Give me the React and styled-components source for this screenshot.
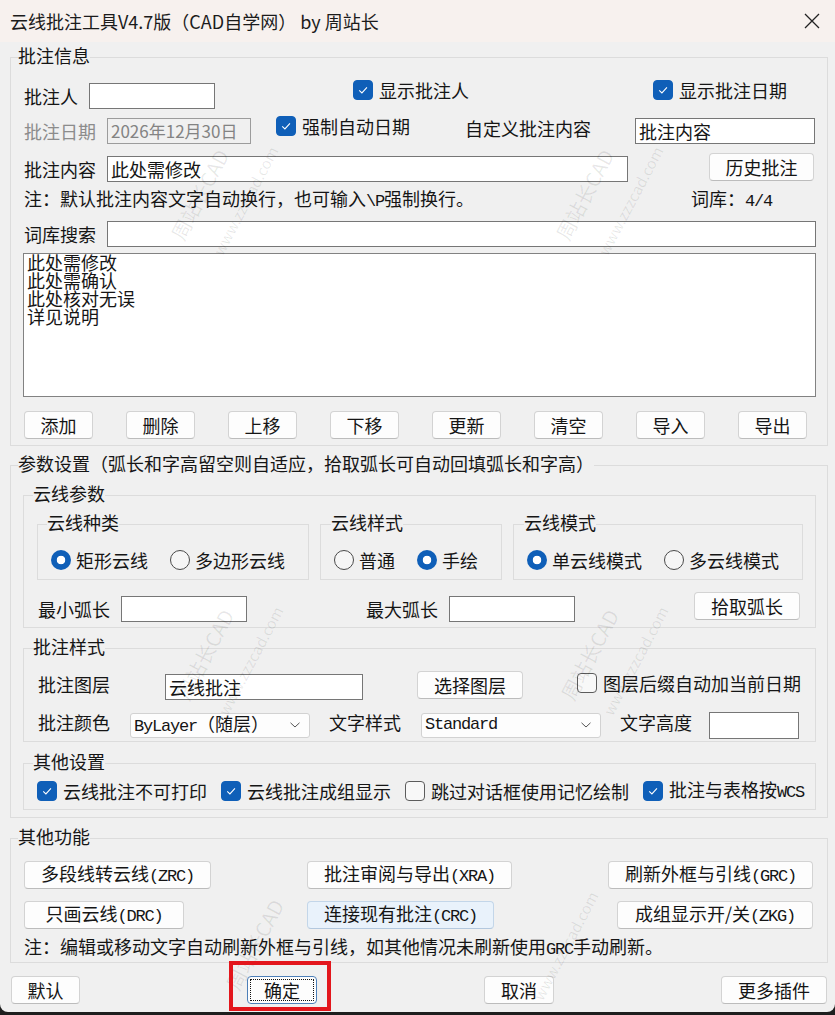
import React from 'react'
import styled, { createGlobalStyle } from 'styled-components'

const GlobalStyle = createGlobalStyle`
  html, body {
    margin: 0;
    padding: 0;
    background: #1e1e1e;
  }
  body {
    font-family: "Noto Sans CJK SC", sans-serif;
    font-size: 18px;
    color: #151515;
  }
`

const marks = [
  { x: 150, y: 180, t: '周站长CAD' },
  { x: 185, y: 190, t: 'www.zzzcad.com' },
  { x: 535, y: 180, t: '周站长CAD' },
  { x: 570, y: 190, t: 'www.zzzcad.com' },
  { x: 155, y: 640, t: '周站长CAD' },
  { x: 190, y: 650, t: 'www.zzzcad.com' },
  { x: 540, y: 640, t: '周站长CAD' },
  { x: 575, y: 650, t: 'www.zzzcad.com' },
  { x: 205, y: 930, t: '周站长CAD' },
  { x: 505, y: 935, t: 'www.zzzcad.com' },
]

const App = () => {
  return (
    <>
      <GlobalStyle />
      <Window>
        <TitleBar>
          <Title>云线批注工具V4.7版（CAD自学网） by 周站长</Title>
          <svg width="16" height="16" viewBox="0 0 16 16">
            <path d="M1 1 L15 15 M15 1 L1 15" stroke="#222" strokeWidth="1.3" fill="none" />
          </svg>
        </TitleBar>

        <Body>
          <Group>
            <Legend>批注信息</Legend>
            <GroupBody $p="0 11px 6px 13px">
              <Row $mt={14}>
                <Label $w={65}>批注人</Label>
                <Field $w={126} />
                <Check $ml={138} $mb={12} $on>显示批注人</Check>
                <Check $ml={184} $mb={12} $on>显示批注日期</Check>
              </Row>
              <Row $mt={9}>
                <Label $w={83} $dim>批注日期</Label>
                <Field $w={144} $dim>2026年12月30日</Field>
                <Check $ml={25} $mb={10} $on>强制自动日期</Check>
                <Label $ml={55} $mb={6}>自定义批注内容</Label>
                <Field $w={180} $ml={44}>批注内容</Field>
              </Row>
              <Row $mt={12}>
                <Label $w={83}>批注内容</Label>
                <Field $w={521}>此处需修改</Field>
                <Btn $w={105} $ml={81} $mb={5}>历史批注</Btn>
              </Row>
              <Row $mt={8} $h={20}>
                <Label>注：默认批注内容文字自动换行，也可输入<Lat>\P</Lat>强制换行。</Label>
                <Label $auto $mr={44}>词库：<Lat>4/4</Lat></Label>
              </Row>
              <Row $mt={11}>
                <Label $w={83}>词库搜索</Label>
                <Field $grow />
              </Row>
              <List>
                <ListLines>
                  <span>此处需修改</span>
                  <span>此处需确认</span>
                  <span>此处核对无误</span>
                  <span>详见说明</span>
                </ListLines>
              </List>
              <ButtonStrip>
                {['添加', '删除', '上移', '下移', '更新', '清空', '导入', '导出'].map(b => (
                  <Btn key={b} $w={69}>{b}</Btn>
                ))}
              </ButtonStrip>
            </GroupBody>
          </Group>

          <Group $mt={7}>
            <Legend>参数设置（弧长和字高留空则自适应，拾取弧长可自动回填弧长和字高）</Legend>
            <GroupBody $p="0 11px 7px 12px">
              <Group $mt={6}>
                <Legend $ml={9}>云线参数</Legend>
                <GroupBody $p="0 0 5px 0">
                  <BoxRow>
                    <Group $mt={5} $w={272}>
                      <Legend $ml={9}>云线种类</Legend>
                      <GroupBody $p="0 0 7px 13px">
                        <Row $mt={12} $h={24}>
                          <Radio $on>矩形云线</Radio>
                          <Radio $ml={22}>多边形云线</Radio>
                        </Row>
                      </GroupBody>
                    </Group>
                    <Group $mt={5} $w={182} $ml={11}>
                      <Legend $ml={10}>云线样式</Legend>
                      <GroupBody $p="0 0 7px 13px">
                        <Row $mt={12} $h={24}>
                          <Radio>普通</Radio>
                          <Radio $ml={22} $on>手绘</Radio>
                        </Row>
                      </GroupBody>
                    </Group>
                    <Group $mt={5} $w={290} $ml={11}>
                      <Legend $ml={10}>云线模式</Legend>
                      <GroupBody $p="0 0 7px 13px">
                        <Row $mt={12} $h={24}>
                          <Radio $on>单云线模式</Radio>
                          <Radio $ml={22}>多云线模式</Radio>
                        </Row>
                      </GroupBody>
                    </Group>
                  </BoxRow>
                  <Row $mt={16} $pl={14}>
                    <Label $w={83}>最小弧长</Label>
                    <Field $w={126} />
                    <Label $w={83} $ml={119}>最大弧长</Label>
                    <Field $w={126} />
                    <Btn $w={106} $ml={119} $mb={6}>拾取弧长</Btn>
                  </Row>
                </GroupBody>
              </Group>

              <Group $mt={8}>
                <Legend $ml={9}>批注样式</Legend>
                <GroupBody $p="0 0 3px 14px">
                  <Row $mt={14}>
                    <Label $w={127} $mb={6}>批注图层</Label>
                    <Field $w={198}>云线批注</Field>
                    <Btn $w={106} $ml={54} $mb={5}>选择图层</Btn>
                    <Check $ml={54} $mb={8}>图层后缀自动加当前日期</Check>
                  </Row>
                  <Row $mt={12}>
                    <Label $w={92} $mb={6}>批注颜色</Label>
                    <Select $w={180}>
                      <span>
                        <Lat>ByLayer</Lat>（随层）
                      </span>
                      <Chevron />
                    </Select>
                    <Label $w={92} $ml={19} $mb={6}>文字样式</Label>
                    <Select $w={180}>
                      <Lat>Standard</Lat>
                      <Chevron />
                    </Select>
                    <Label $w={89} $ml={19} $mb={6}>文字高度</Label>
                    <Field $w={90} $h={27} />
                  </Row>
                </GroupBody>
              </Group>

              <Group $mt={9}>
                <Legend $ml={9}>其他设置</Legend>
                <GroupBody $p="0 0 8px 13px">
                  <Row $mt={6} $h={20}>
                    <Check $on>云线批注不可打印</Check>
                    <Check $ml={14} $on>云线批注成组显示</Check>
                    <Check $ml={14}>跳过对话框使用记忆绘制</Check>
                    <Check $ml={14} $on>
                      批注与表格按<Lat>WCS</Lat>
                    </Check>
                  </Row>
                </GroupBody>
              </Group>
            </GroupBody>
          </Group>

          <Group $mt={8}>
            <Legend>其他功能</Legend>
            <GroupBody $p="0 0 4px 13px">
              <Row $mt={11} $h={28}>
                <Btn $w={187}>多段线转云线<Lat>(ZRC)</Lat></Btn>
                <Btn $w={205} $ml={96}>批注审阅与导出<Lat>(XRA)</Lat></Btn>
                <Btn $w={205} $ml={96}>刷新外框与引线<Lat>(GRC)</Lat></Btn>
              </Row>
              <Row $mt={12} $h={28}>
                <Btn $w={160}>只画云线<Lat>(DRC)</Lat></Btn>
                <Btn $w={187} $ml={123} $hover>连接现有批注<Lat>(CRC)</Lat></Btn>
                <Btn $w={196} $ml={123}>成组显示开/关<Lat>(ZKG)</Lat></Btn>
              </Row>
              <Row $mt={9} $h={20}>
                <Label>
                  注：编辑或移动文字自动刷新外框与引线，如其他情况未刷新使用<Lat>GRC</Lat>手动刷新。
                </Label>
              </Row>
            </GroupBody>
          </Group>

          <Footer>
            <Btn $w={69} $ml={1}>默认</Btn>
            <Btn $w={70} $ml={167} $focus>确定</Btn>
            <Btn $w={70} $ml={167}>取消</Btn>
            <Btn $w={106} $ml={167}>更多插件</Btn>
          </Footer>
        </Body>

        {marks.map((m, i) => (
          <Mark key={i} $x={m.x} $y={m.y} $small={m.t.startsWith('www')}>{m.t}</Mark>
        ))}
        <Highlight />
      </Window>
    </>
  )
}

export default App

const Check = ({ $on, $ml, $mb, children }) => (
  <CheckItem $ml={$ml} $mb={$mb}>
    <CheckBox $on={$on}>
      {$on && (
        <svg width="20" height="20" viewBox="0 0 20 20">
          <path d="M5.8 10.3 L8.8 13.2 L14.4 7.2" stroke="#fff" strokeWidth="1.2" fill="none" />
        </svg>
      )}
    </CheckBox>
    <span>{children}</span>
  </CheckItem>
)

const Radio = ({ $on, $ml, children }) => (
  <CheckItem $ml={$ml} $gap={5}>
    <RadioDot $on={$on} />
    <span>{children}</span>
  </CheckItem>
)

const Chevron = () => (
  <svg width="12" height="8" viewBox="0 0 12 8">
    <path d="M1.5 1.8 L6 6 L10.5 1.8" stroke="#555" strokeWidth="1" fill="none" />
  </svg>
)

const Window = styled.div`
  position: relative;
  width: 835px;
  height: 1012px;
  background: #f0f0f0;
  border-radius: 0 0 8px 8px;
  overflow: hidden;
  display: flex;
  flex-direction: column;
`

const TitleBar = styled.div`
  height: 42px;
  flex: none;
  background: #f7f1ee;
  display: flex;
  align-items: center;
  justify-content: space-between;
  padding: 0 15px 0 10px;
`

const Title = styled.div`
  font-size: 18px;
  line-height: 24px;
  color: #1b1b1b;
  white-space: nowrap;
`

const Body = styled.div`
  padding: 3px 7px 0 10px;
  display: flex;
  flex-direction: column;
`

const Group = styled.fieldset`
  margin: ${p => p.$mt || 0}px 0 0 ${p => p.$ml || 0}px;
  padding: 0;
  border: 1px solid #dcdcdc;
  box-sizing: border-box;
  min-width: 0;
  flex: none;
  width: ${p => (p.$w ? p.$w + 'px' : 'auto')};
`

const Legend = styled.legend`
  padding: 0 0 4px 0;
  margin-left: ${p => (p.$ml != null ? p.$ml : 7)}px;
  font-size: 18px;
  line-height: 20px;
  color: #151515;
  white-space: nowrap;
`

const GroupBody = styled.div`
  padding: ${p => p.$p};
`

const BoxRow = styled.div`
  display: flex;
  padding-left: 13px;
`

const Row = styled.div`
  display: flex;
  align-items: center;
  height: ${p => p.$h || 26}px;
  margin-top: ${p => p.$mt || 0}px;
  padding-left: ${p => p.$pl || 0}px;
  line-height: 20px;
`

const Label = styled.span`
  flex: none;
  width: ${p => (p.$w ? p.$w + 'px' : 'auto')};
  margin-left: ${p => (p.$auto ? 'auto' : (p.$ml || 0) + 'px')};
  margin-right: ${p => p.$mr || 0}px;
  margin-bottom: ${p => p.$mb || 0}px;
  color: ${p => (p.$dim ? '#8c8c8c' : '#151515')};
  white-space: nowrap;
`

const Lat = styled.span`
  font-family: "Liberation Mono", monospace;
  font-size: 17px;
  letter-spacing: -1.2px;
`

const Field = styled.div`
  flex: ${p => (p.$grow ? '1 1 auto' : 'none')};
  width: ${p => (p.$grow ? 'auto' : p.$w + 'px')};
  height: ${p => p.$h || 26}px;
  box-sizing: border-box;
  margin-left: ${p => p.$ml || 0}px;
  border: 1px solid ${p => (p.$dim ? '#9c9c9c' : '#767676')};
  background: ${p => (p.$dim ? '#f0f0f0' : '#ffffff')};
  color: ${p => (p.$dim ? '#838383' : '#151515')};
  padding: 0 3px;
  display: flex;
  align-items: center;
  white-space: nowrap;
  overflow: hidden;
  font-size: ${p => (p.$dim ? 17 : 18)}px;
`

const Select = styled.div`
  flex: none;
  width: ${p => p.$w}px;
  height: 25px;
  box-sizing: border-box;
  border: 1px solid #d2d2d2;
  border-radius: 3px;
  background: #fdfdfd;
  padding: 0 8px 0 3px;
  display: flex;
  align-items: center;
  justify-content: space-between;
  white-space: nowrap;
`

const List = styled.div`
  margin: 6px 0 0 -1px;
  height: 144px;
  box-sizing: border-box;
  border: 1px solid #828282;
  background: #ffffff;
  padding: 0 3px;
`

const ListLines = styled.div`
  display: flex;
  flex-direction: column;
  margin-top: -1px;
  line-height: 18px;
`

const ButtonStrip = styled.div`
  display: flex;
  gap: 33px;
  margin-top: 14px;
`

const Btn = styled.button`
  flex: none;
  width: ${p => p.$w}px;
  height: 28px;
  box-sizing: border-box;
  margin: 0 0 ${p => p.$mb || 0}px ${p => p.$ml || 0}px;
  padding: 0;
  border: 1px solid ${p => (p.$hover ? '#c3d6e9' : '#d3d3d3')};
  border-bottom-color: ${p => (p.$hover ? '#b3c8de' : '#bcbcbc')};
  border-radius: 4px;
  background: ${p => (p.$hover ? '#e9f2fb' : '#fdfdfd')};
  font-family: inherit;
  font-size: 18px;
  line-height: 20px;
  color: #151515;
  text-align: center;
  white-space: nowrap;
  ${p =>
    p.$focus &&
    `
    border-color: #4d7fb8;
    outline: 1px dotted #111;
    outline-offset: -4px;
  `}
`

const CheckItem = styled.label`
  flex: none;
  display: flex;
  align-items: center;
  gap: ${p => p.$gap || 6}px;
  margin-left: ${p => p.$ml || 0}px;
  margin-bottom: ${p => p.$mb || 0}px;
  white-space: nowrap;
`

const CheckBox = styled.span`
  flex: none;
  width: 20px;
  height: 20px;
  box-sizing: border-box;
  border-radius: 4px;
  display: flex;
  align-items: center;
  justify-content: center;
  background: ${p => (p.$on ? '#0f5fb8' : '#f8f8f8')};
  border: 1px solid ${p => (p.$on ? '#0f5fb8' : '#5c5c5c')};
`

const RadioDot = styled.span`
  flex: none;
  width: 20px;
  height: 20px;
  box-sizing: border-box;
  border-radius: 50%;
  ${p =>
    p.$on
      ? 'background: radial-gradient(circle, #ffffff 0 4px, #0f5fb8 4.6px);'
      : 'background: #f6f6f6; border: 1px solid #4a4a4a;'}
`

const Footer = styled.div`
  display: flex;
  margin-top: 13px;
`

const Mark = styled.span`
  position: absolute;
  left: ${p => p.$x}px;
  top: ${p => p.$y}px;
  font-size: ${p => (p.$small ? 15 : 20)}px;
  color: rgba(0, 0, 0, 0.09);
  transform: rotate(-62deg);
  transform-origin: center;
  white-space: nowrap;
  pointer-events: none;
`

const Highlight = styled.div`
  position: absolute;
  left: 229px;
  top: 961px;
  width: 102px;
  height: 50px;
  box-sizing: border-box;
  border: 4px solid #e3161c;
  pointer-events: none;
`
